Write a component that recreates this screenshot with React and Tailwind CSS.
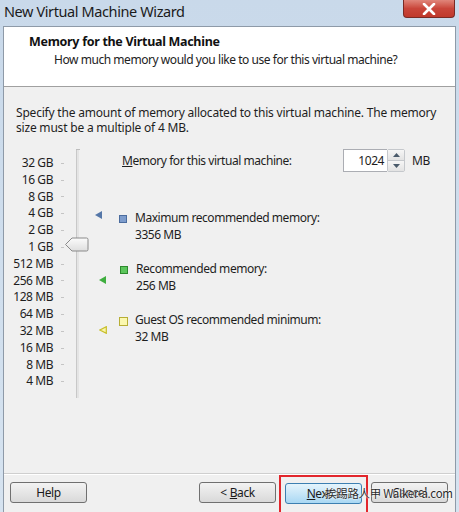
import React from "react";

const labels = ["32 GB","16 GB","8 GB","4 GB","2 GB","1 GB","512 MB","256 MB","128 MB","64 MB","32 MB","16 MB","8 MB","4 MB"];

function Btn({ children, className = "" }) {
  return (
    <div className={"h-[21px] w-[77px] shrink-0 rounded-[3px] border flex items-center justify-center text-[12px] text-[#1a1a1a] " + className}>
      {children}
    </div>
  );
}

export default function App() {
  return (
    <div className="w-[459px] h-[512px] overflow-hidden bg-gradient-to-b from-[#c9d9ea] to-[#d6e3f0] flex flex-col text-[#1e1e1e] tracking-[-0.45px]" style={{ fontFamily: '"Noto Sans", "Open Sans", sans-serif' }}>
      {/* Title bar */}
      <div className="h-[26px] flex items-start justify-between shrink-0">
        <div className="pl-[4px] pt-[1px] text-[14.5px] leading-[20px] text-[#1b1b1b] tracking-[-0.4px]">New Virtual Machine Wizard</div>
        <div className="mr-[4px] w-[52px] h-[18px] rounded-b-[4px] border border-t-0 border-[#7a2a24] bg-gradient-to-b from-[#e0857a] via-[#c9453a] to-[#c0392b] flex items-center justify-center">
          <svg width="14" height="12" viewBox="0 0 14 12">
            <path d="M2 1 L12 11 M12 1 L2 11" stroke="#ffffff" strokeWidth="2.6" strokeLinecap="round" />
          </svg>
        </div>
      </div>
      {/* Client */}
      <div className="flex-1 mx-[3px] border border-b-0 border-[#8e9aa8] flex flex-col bg-[#f0f0f0]">
        {/* Header */}
        <div className="h-[60px] bg-white border-b border-[#a0a0a0] shrink-0 pt-[6px]">
          <div className="pl-[25px] text-[12.5px] font-bold leading-[18px] text-[#111] tracking-[-0.3px]">Memory for the Virtual Machine</div>
          <div className="pl-[50px] text-[12px] leading-[18px] text-[#222]">How much memory would you like to use for this virtual machine?</div>
        </div>
        {/* Body */}
        <div className="flex-1 flex flex-col">
          <div className="pl-[12px] pt-[18px] text-[12px] leading-[15px] text-[#1e1e1e] pr-[6px] tracking-[-0.2px]">
            Specify the amount of memory allocated to this virtual machine. The memory size must be a multiple of 4 MB.
          </div>
          <div className="flex mt-[19px] h-[238px]">
            {/* labels */}
            <div className="w-[49px] flex flex-col text-right text-[12px] text-[#1e1e1e] pt-[1px]">
              {labels.map((l) => (
                <div key={l} className="h-[16.8px] leading-[16.8px]">{l}</div>
              ))}
            </div>
            {/* ticks */}
            <div className="w-[13px] flex flex-col pt-[1px]">
              {labels.map((l) => (
                <div key={l} className="h-[16.8px] flex items-center justify-end pr-[2px]">
                  <div className="w-[3px] h-[1px] bg-[#c4c4c4]" />
                </div>
              ))}
            </div>
            {/* track + thumb */}
            <div className="w-[24px] relative">
              <div className="absolute left-[10px] top-[-5px] bottom-[-6px] w-[3px] border-l border-[#c8c8c8] bg-[#e4e4e4]" />
              <div className="absolute left-[10px] top-[-5px] w-[4px] h-[1px] bg-[#bdbdbd]" />
              <svg className="absolute left-[-1px] top-[83px]" width="24" height="15" viewBox="0 0 24 15">
                <defs>
                  <linearGradient id="th" x1="0" y1="0" x2="0" y2="1">
                    <stop offset="0" stopColor="#fbfbfb" />
                    <stop offset="1" stopColor="#dedede" />
                  </linearGradient>
                </defs>
                <path d="M0.5 7.5 L7 1 H21.5 Q23 1 23 2.5 V12.5 Q23 14 21.5 14 H7 Z" fill="url(#th)" stroke="#8a8a8a" strokeWidth="1" />
              </svg>
            </div>
            {/* right side */}
            <div className="flex-1 flex flex-col">
              <div className="flex items-center h-[23px] mt-[-5px]">
                <div className="ml-[32px] text-[12px] w-[221px]"><span className="underline">M</span>emory for this virtual machine:</div>
                <div className="flex h-[23px]">
                  <div className="w-[44px] h-[23px] bg-white border border-[#abadb3] border-r-0 text-[12px] leading-[21px] text-right pr-[3px]">1024</div>
                  <div className="w-[18px] h-[23px] flex flex-col border border-[#c5c8cc] rounded-[2px]">
                    <div className="flex-1 bg-gradient-to-b from-[#f6f6f6] to-[#e3e3e3] border-b border-[#c5c8cc] flex items-center justify-center">
                      <svg width="7" height="4" viewBox="0 0 7 4"><path d="M0 4 L3.5 0 L7 4 Z" fill="#4a5a6a" /></svg>
                    </div>
                    <div className="flex-1 bg-gradient-to-b from-[#f6f6f6] to-[#e3e3e3] flex items-center justify-center">
                      <svg width="7" height="4" viewBox="0 0 7 4"><path d="M0 0 L3.5 4 L7 0 Z" fill="#4a5a6a" /></svg>
                    </div>
                  </div>
                  <div className="ml-[7px] text-[12px] leading-[23px]">MB</div>
                </div>
              </div>
              {/* legend */}
              <div className="flex mt-[38px]">
                <div className="w-[28px] flex justify-end pr-[16px] pt-[1px]">
                  <svg width="7" height="8" viewBox="0 0 7 8"><path d="M0 4 L7 0 V8 Z" fill="#5577a8" /></svg>
                </div>
                <div className="pt-[5px] pr-[8px] ml-[1px]">
                  <div className="w-[8px] h-[8px] bg-[#7d9ccc] border border-[#4b6c9e]" />
                </div>
                <div className="text-[12px] leading-[16.5px]">
                  <div>Maximum recommended memory:</div>
                  <div>3356 MB</div>
                </div>
              </div>
              <div className="flex mt-[18px]">
                <div className="w-[28px] flex justify-end pr-[12px] pt-[15px]">
                  <svg width="7" height="8" viewBox="0 0 7 8"><path d="M0 4 L7 0 V8 Z" fill="#3fae3f" /></svg>
                </div>
                <div className="pt-[5px] pr-[8px] ml-[2px]">
                  <div className="w-[8px] h-[8px] bg-[#5cc65c] border border-[#2e8a2e]" />
                </div>
                <div className="text-[12px] leading-[16.5px]">
                  <div>Recommended memory:</div>
                  <div>256 MB</div>
                </div>
              </div>
              <div className="flex mt-[18px]">
                <div className="w-[28px] flex justify-end pr-[11px] pt-[14px]">
                  <svg width="8" height="8" viewBox="0 0 8 8"><path d="M0.8 4 L7.3 0.7 V7.3 Z" fill="#fbf6a8" stroke="#c7be2a" strokeWidth="1.2" /></svg>
                </div>
                <div className="pt-[5px] pr-[7px] ml-[1px]">
                  <div className="w-[9px] h-[9px] bg-[#fbf8b0] border border-[#b7ae35]" />
                </div>
                <div className="text-[12px] leading-[16.5px]">
                  <div>Guest OS recommended minimum:</div>
                  <div>32 MB</div>
                </div>
              </div>
            </div>
          </div>
          <div className="flex-1" />
          {/* footer */}
          <div className="border-t border-[#cfcfcf] shadow-[inset_0_1px_0_#ffffff] h-[39px] flex items-start pt-[8px] pl-[6px] relative">
            <Btn className="border-[#707070] bg-gradient-to-b from-[#f3f3f3] to-[#d9d9d9]">Help</Btn>
            <div className="flex-1" />
            <Btn className="w-[76px] border-[#707070] bg-gradient-to-b from-[#f3f3f3] to-[#d9d9d9]">&lt; <span className="underline ml-[3px]">B</span>ack</Btn>
            <div className="ml-[3px] mt-[-7px] pt-[6px] px-[4px] pb-[10px] border-2 border-[#e2262c]">
              <Btn className="border-[#3c7fb1] bg-gradient-to-b from-[#e5f4fc] to-[#a9d8f3]"><span className="underline">N</span>ext &gt;</Btn>
            </div>
            <Btn className="ml-[3px] mr-[7px] border-[#707070] bg-gradient-to-b from-[#f3f3f3] to-[#d9d9d9]">Cancel</Btn>
            <div className="absolute left-[321px] top-[11px] text-[11.5px] leading-[16px] tracking-[-0.3px] text-[#2a2a2a] whitespace-nowrap" style={{ fontFamily: '"Noto Sans CJK TC", "Noto Sans", sans-serif', textShadow: "0 0 2px #ffffff, 0 0 2px #ffffff" }}>
              挨踢路人甲 Walker-a.com
            </div>
          </div>
        </div>
      </div>
    </div>
  );
}
